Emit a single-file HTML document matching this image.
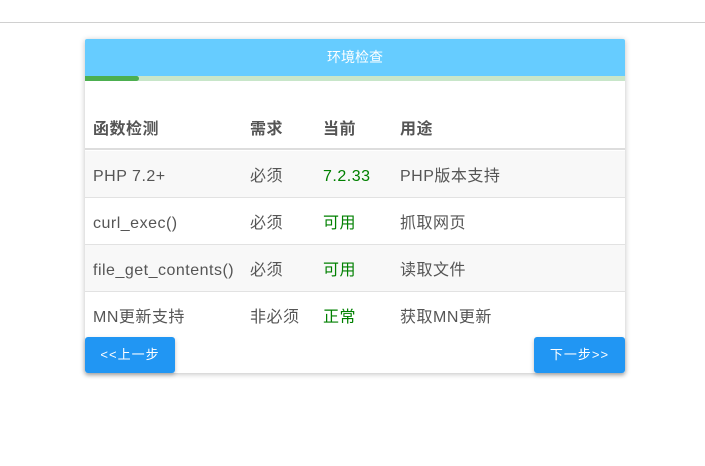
<!DOCTYPE html>
<html><head><meta charset="utf-8"><style>
*{margin:0;padding:0;box-sizing:border-box}
body{width:705px;height:466px;background:#fff;font-family:"Liberation Sans","Noto Sans CJK SC",sans-serif;position:relative;overflow:hidden}
.top{position:absolute;left:0;top:22px;width:705px;height:1px;background:#d0d0d0}
.card{position:absolute;left:85px;top:39px;width:540px;height:334px;background:#fff;box-shadow:0 1px 6px rgba(0,0,0,.25);border-radius:2px}
.hd{height:37px;background:#66ccff;color:#fff;text-align:center;line-height:37px;font-size:14px;border-radius:2px 2px 0 0}
.pb{height:5px;background:#c8e6c9;position:relative}
.pb i{position:absolute;left:0;top:0;height:5px;width:54px;background:#4caf50;border-radius:0 3px 3px 0}
.row{position:absolute;left:0;width:540px;font-size:16px;letter-spacing:0.5px;color:#555}
.row span{position:absolute;top:2px}
.th{top:70px;height:41px;font-weight:bold;line-height:38px;border-bottom:2px solid #ddd}
.r{height:47px;line-height:47px;border-bottom:1px solid #e2e2e2}
.g{color:#008000}
.btn{position:absolute;top:298px;height:36px;background:#2196f3;color:#fff;font-size:13px;letter-spacing:1px;line-height:36px;text-align:center;border-radius:3px;box-shadow:0 2px 4px rgba(0,0,0,.25)}
</style></head><body>
<div class="top"></div>
<div class="card">
<div class="hd">环境检查</div>
<div class="pb"><i></i></div>
<div class="row th"><span style="left:8px">函数检测</span><span style="left:165px">需求</span><span style="left:238px">当前</span><span style="left:315px">用途</span></div>
<div class="row r" style="top:112px;background:#f8f8f8"><span style="left:8px">PHP 7.2+</span><span style="left:165px">必须</span><span style="left:238px" class="g">7.2.33</span><span style="left:315px">PHP版本支持</span></div>
<div class="row r" style="top:159px"><span style="left:8px">curl_exec()</span><span style="left:165px">必须</span><span style="left:238px" class="g">可用</span><span style="left:315px">抓取网页</span></div>
<div class="row r" style="top:206px;background:#f8f8f8"><span style="left:8px">file_get_contents()</span><span style="left:165px">必须</span><span style="left:238px" class="g">可用</span><span style="left:315px">读取文件</span></div>
<div class="row r" style="top:253px;border-bottom:none"><span style="left:8px">MN更新支持</span><span style="left:165px">非必须</span><span style="left:238px" class="g">正常</span><span style="left:315px">获取MN更新</span></div>
<div class="btn" style="left:0;width:90px">&lt;&lt;上一步</div>
<div class="btn" style="left:449px;width:91px">下一步&gt;&gt;</div>
</div>
</body></html>
